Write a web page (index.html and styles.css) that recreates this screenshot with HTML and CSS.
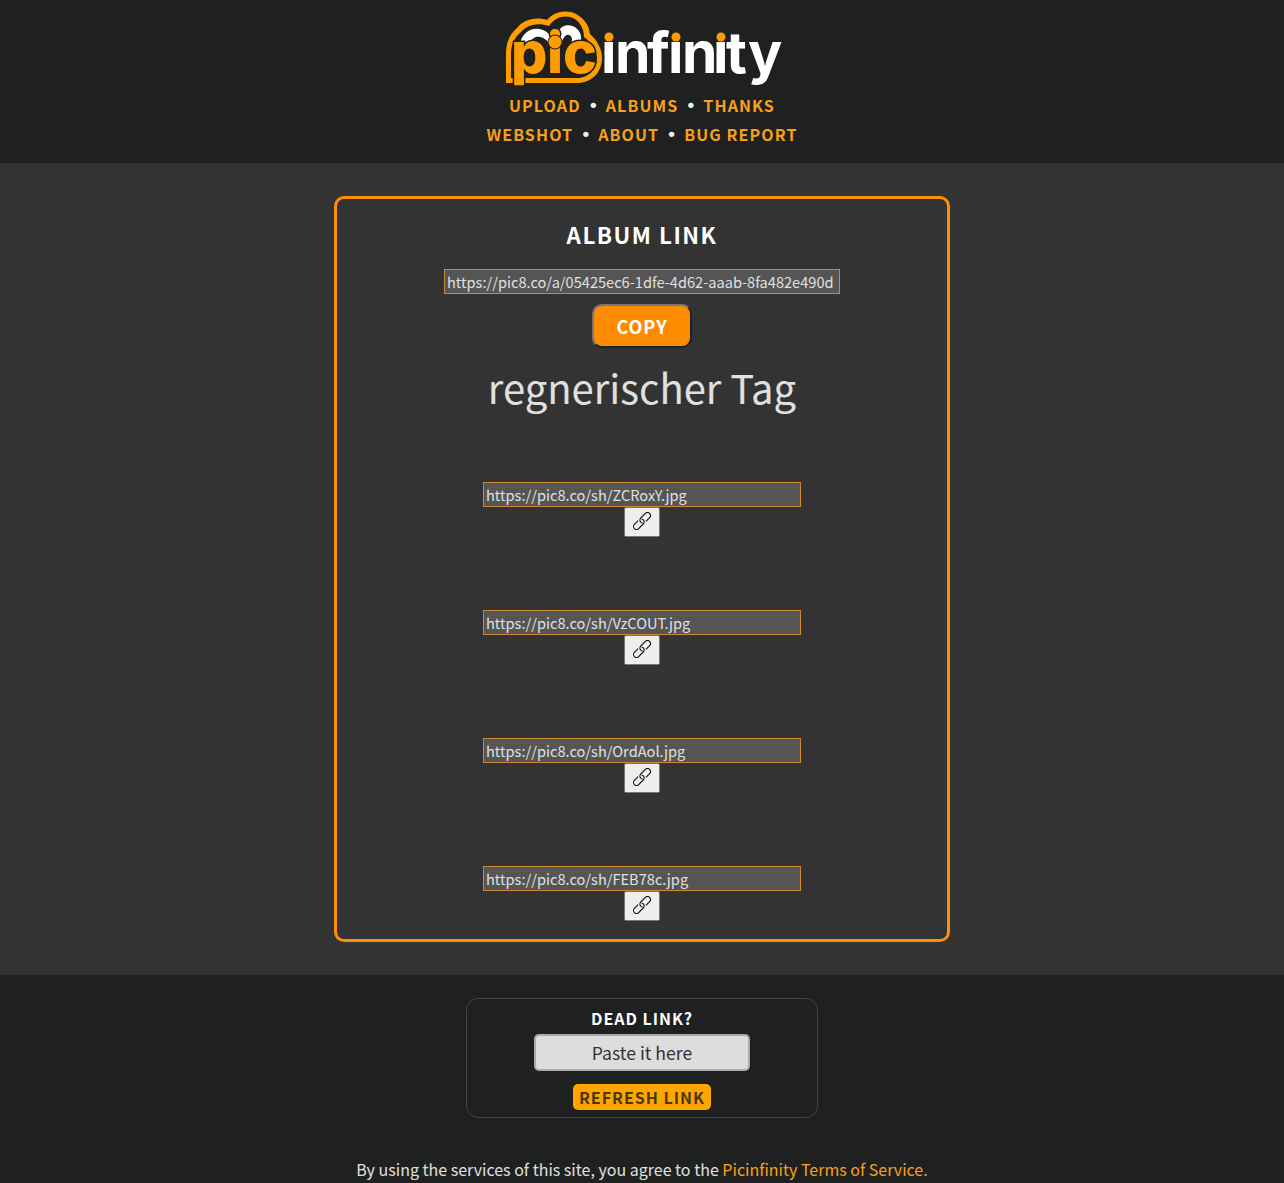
FILE: index.html
```html
<!DOCTYPE html>
<html lang="en">
<head>
<meta charset="utf-8">
<title>Picinfinity</title>
<link rel="stylesheet" href="styles.css">
</head>
<body>
<svg class="defs" width="0" height="0" aria-hidden="true">
  <symbol id="chain" viewBox="0 0 18 18">
    <g transform="rotate(-45 9 9)">
      <path d="M6.5 6H1.25A3 3 0 0 0 1.25 12H7.75A3 3 0 0 0 10.2 7.3"/>
      <path d="M11.5 12H16.75A3 3 0 0 0 16.75 6H10.25A3 3 0 0 0 7.8 10.7"/>
    </g>
  </symbol>
</svg>
<header class="top">
  <a class="logo" href="#" aria-label="Picinfinity">
    <svg class="logo-svg" viewBox="0 0 285 80" width="285" height="80">
      <path class="c-or" d="M1 73V44C1 32 5 24 12 18C18 10 30 6 42 10C47 3 57 0 66 2C76 5 84 13 85 24C93 31 97 40 97 48C97 63 86 73 72 73Z"/>
      <path class="c-dk" d="M6 68V44C6 34 10 27 16 22C22 15 32 12 44 16C49 8 58 5 65 7C73 9 79 17 79 27C87 33 92 40 92 48C92 60 83 68 72 68Z"/>
      <path class="c-wh" d="M15 34C17 22 28 16 38 20C43 22 46 26 48 29C51 24 53 20 57 17C63 13 72 16 75 23C77 28 76 33 75 37L66 33C68 30 67 26 64 25C61 24 59 27 57 31L44 33C41 29 36 26 31 27C27 28 25 32 25 36Z"/>
      <text class="pic" x="6 42 58" y="63">pic</text>
      <text class="inf" x="96 110 142 163 177 208 221 243" y="63">infinity</text>
      <rect class="cover" x="97" y="14" width="14" height="17"/>
      <rect class="cover" x="164" y="14" width="14" height="17"/>
      <rect class="cover" x="209" y="14" width="13" height="17"/>
      <circle class="dot dot-pic" cx="50" cy="32" r="6.5"/>
      <circle class="dot" cx="104" cy="27" r="4.5"/>
      <circle class="dot" cx="171" cy="27" r="4.5"/>
      <circle class="dot" cx="216" cy="27" r="4.5"/>
    </svg>
  </a>
  <nav class="nav">
    <div class="nav-row"><a href="#">UPLOAD</a><span class="sep">•</span><a href="#">ALBUMS</a><span class="sep">•</span><a href="#">THANKS</a></div>
    <div class="nav-row"><a href="#">WEBSHOT</a><span class="sep">•</span><a href="#">ABOUT</a><span class="sep">•</span><a href="#">BUG REPORT</a></div>
  </nav>
</header>

<main class="main">
  <section class="card">
    <h2 class="card-title">ALBUM LINK</h2>
    <input class="url url-album" type="text" readonly value="https://pic8.co/a/05425ec6-1dfe-4d62-aaab-8fa482e490d">
    <button class="copy" type="button">COPY</button>
    <h1 class="album-name">regnerischer Tag</h1>
    <div class="shots">
      <div class="shot">
        <input class="url url-shot" type="text" readonly value="https://pic8.co/sh/ZCRoxY.jpg">
        <button class="link-btn" type="button" aria-label="Copy link"><svg class="chain" width="18" height="18"><use href="#chain"/></svg></button>
      </div>
      <div class="shot">
        <input class="url url-shot" type="text" readonly value="https://pic8.co/sh/VzCOUT.jpg">
        <button class="link-btn" type="button" aria-label="Copy link"><svg class="chain" width="18" height="18"><use href="#chain"/></svg></button>
      </div>
      <div class="shot">
        <input class="url url-shot" type="text" readonly value="https://pic8.co/sh/OrdAol.jpg">
        <button class="link-btn" type="button" aria-label="Copy link"><svg class="chain" width="18" height="18"><use href="#chain"/></svg></button>
      </div>
      <div class="shot">
        <input class="url url-shot" type="text" readonly value="https://pic8.co/sh/FEB78c.jpg">
        <button class="link-btn" type="button" aria-label="Copy link"><svg class="chain" width="18" height="18"><use href="#chain"/></svg></button>
      </div>
    </div>
  </section>
</main>

<footer class="foot">
  <form class="dead">
    <div class="dead-title">DEAD LINK?</div>
    <input class="dead-input" type="text" placeholder="Paste it here">
    <button class="refresh" type="button">REFRESH LINK</button>
  </form>
  <p class="terms">By using the services of this site, you agree to the <a href="#">Picinfinity Terms of Service.</a></p>
</footer>
</body>
</html>
```
FILE: styles.css
```css
* { box-sizing: border-box; }
html, body { margin: 0; padding: 0; }
body {
  background: #1f2020;
  color: #e0e0e0;
  font-family: "Noto Sans CJK SC", "Noto Sans", sans-serif;
}
a { text-decoration: none; }
.defs { position: absolute; }

.top {
  height: 163px;
  padding-top: 10px;
  display: flex;
  flex-direction: column;
  align-items: center;
}
.logo { display: block; height: 80px; width: 285px; margin-left: 11px; }
.logo-svg { display: block; }
.c-or { fill: #ff9d00; }
.c-dk { fill: #1f2020; }
.c-wh { fill: #fff; }
.dot { fill: #ff9d00; }
.dot-pic { stroke: #1f2020; stroke-width: 2px; paint-order: stroke; }
.cover { fill: #1f2020; }
.pic {
  font-family: "Inter", sans-serif;
  font-weight: 800;
  font-size: 57px;
  fill: #ff9d00;
  stroke: #1f2020;
  stroke-width: 3px;
  paint-order: stroke;
}
.inf {
  font-family: "Inter", sans-serif;
  font-weight: 700;
  font-size: 57px;
  fill: #fff;
}

.nav { margin-top: 1px; }
.nav-row {
  display: flex;
  justify-content: center;
  align-items: center;
  height: 29px;
  font-size: 16px;
  font-weight: 600;
  letter-spacing: 1.1px;
  padding-bottom: 1px;
}
.nav-row a { color: #f9a01b; }
.sep { color: #eee; width: 25px; text-align: center; font-family: "Liberation Sans", sans-serif; font-size: 19px; letter-spacing: 0; }

.main {
  background: #333333;
  padding: 33px 0;
  display: flex;
  justify-content: center;
}
.card {
  width: 616px;
  height: 746px;
  border: 3px solid #ff8c0a;
  border-radius: 10px;
  padding-top: 17px;
  display: flex;
  flex-direction: column;
  align-items: center;
}
.card-title {
  margin: 0;
  color: #fff;
  font-size: 22.4px;
  font-weight: 600;
  letter-spacing: 1.5px;
  line-height: 36px;
}
.url {
  display: block;
  height: 25px;
  padding: 0 2px;
  background: #555555;
  border: 1px solid #cf8a30;
  color: #e0e0e0;
  font-family: inherit;
  font-size: 14.6px;
  outline: none;
}
.url-album { width: 396px; margin-top: 17px; }
.copy {
  margin-top: 10px;
  width: 100px;
  height: 44px;
  background: #ff8c00;
  color: #fff;
  border: 2px solid;
  border-color: #777 #222 #222 #777;
  border-radius: 10px;
  font-family: inherit;
  font-size: 18px;
  font-weight: 600;
  letter-spacing: 1px;
  padding: 0;
}
.album-name {
  margin: 9px 0 0;
  color: #e0e0e0;
  font-size: 40px;
  font-weight: 400;
  line-height: 60px;
}
.shots { margin-top: 65px; display: flex; flex-direction: column; gap: 73px; align-items: center; }
.shot { display: flex; flex-direction: column; align-items: center; height: 55px; }
.url-shot { width: 318px; }
.link-btn {
  width: 36px;
  height: 30px;
  padding: 0 1px 2px 0;
  background: #efefef;
  border: 1px solid #767676;
  border-radius: 2px;
  display: flex;
  align-items: center;
  justify-content: center;
}
.chain { display: block; fill: none; stroke: #111; stroke-width: 1.1px; overflow: visible; }

.foot { display: flex; flex-direction: column; align-items: center; padding-top: 23px; }
.dead {
  width: 352px;
  height: 120px;
  border: 1px solid #444;
  border-radius: 12px;
  padding-top: 7px;
  display: flex;
  flex-direction: column;
  align-items: center;
}
.dead-title {
  color: #fff;
  font-size: 16px;
  font-weight: 600;
  letter-spacing: 1px;
  line-height: 24px;
}
.dead-input {
  margin-top: 4px;
  width: 216px;
  height: 37px;
  background: #dddddd;
  border: 2px solid #aaaaaa;
  border-radius: 5px;
  font-family: inherit;
  font-size: 17.6px;
  text-align: center;
  color: #333;
  outline: none;
}
.dead-input::placeholder { color: #333; opacity: 1; }
.refresh {
  margin-top: 13px;
  width: 138px;
  height: 26px;
  background: #ffa500;
  color: #4a3810;
  border: 0;
  border-radius: 5px;
  padding: 0;
  font-family: inherit;
  font-size: 16px;
  font-weight: 600;
  letter-spacing: 1px;
  white-space: nowrap;
}
.terms { margin: 38px 0 0; padding-bottom: 20px; font-size: 16px; line-height: 27px; color: #e0e0e0; }
.terms a { color: #f9a01b; }
```
